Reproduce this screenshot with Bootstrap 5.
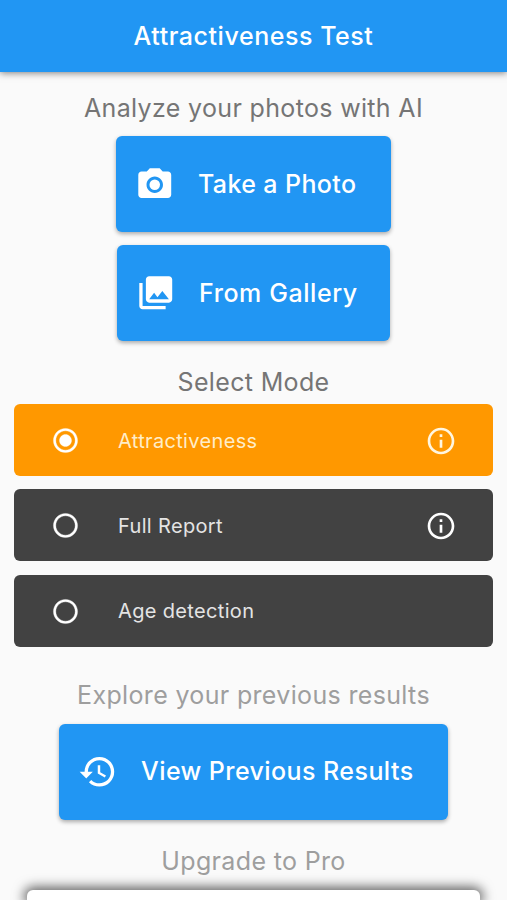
<!DOCTYPE html>
<html lang="en">
<head>
<meta charset="utf-8">
<meta name="viewport" content="width=device-width, initial-scale=1">
<title>Attractiveness Test</title>
<link href="https://cdn.jsdelivr.net/npm/bootstrap@5.3.0/dist/css/bootstrap.min.css" rel="stylesheet">
<style>
body{background:#fafafa;font-family:Inter,"Liberation Sans",sans-serif;height:900px;overflow:hidden}
.app-bar{height:72px;background:#2196f3;box-shadow:0 1px 7px rgba(0,0,0,.5);font-size:25px;font-weight:500;letter-spacing:.55px;line-height:73px}
.caption{font-size:25px;letter-spacing:.34px;line-height:32px;color:#757575;white-space:nowrap;margin-top:25px}
.caption-first{margin-top:19.5px}
.caption-results{margin-top:32px}
.caption-soft{color:#9e9e9e}
.action{height:96px;border-radius:6px;background:#2196f3;color:#fff;font-size:25px;font-weight:500;letter-spacing:.43px;padding:0 0 0 19px;gap:23.5px;box-shadow:0 2px 4px rgba(0,0,0,.32);white-space:nowrap;border:0;margin-top:12.8px}
.action:hover{background:#1e88e5;color:#fff}
.action svg{width:39.5px;height:39.5px;flex:none}
.action span{padding-top:1px}
.w-photo{width:275px;letter-spacing:.38px}
.w-gallery{width:273px;letter-spacing:.58px}
.w-history{width:389px}
.modes{gap:13.4px;padding:0 14px;margin-top:6px}
.mode{height:72px;border-radius:6px;background:#424242;color:#e4e4e4;font-size:20px;letter-spacing:.34px;padding:1px 36px 0 37px}
.mode.on{background:#ff9800;color:#ffedc8}
.mode svg{width:29px;height:29px;flex:none;fill:#fff;stroke:#fff;stroke-width:.25}
.mode .label{margin-left:38px}
.mode svg.info{width:32px;height:32px;stroke:none}
.mode.on svg.info{fill:#fff6e0}
.pro{margin:13px 27px 0;height:10px;border-radius:6px 6px 0 0;background:#fff;box-shadow:0 0 12px 3px rgba(0,0,0,.62)}
</style>
</head>
<body>
<header class="app-bar text-white text-center">Attractiveness Test</header>
<main class="d-flex flex-column align-items-center">
  <div class="caption caption-first">Analyze your photos with AI</div>
  <button class="action w-photo btn d-flex align-items-center">
    <svg viewBox="0 0 24 24" fill="currentColor"><circle cx="12" cy="12" r="3.2"/><path d="M9 2 7.17 4H4c-1.1 0-2 .9-2 2v12c0 1.1.9 2 2 2h16c1.1 0 2-.9 2-2V6c0-1.1-.9-2-2-2h-3.17L15 2H9zm3 15c-2.76 0-5-2.24-5-5s2.24-5 5-5 5 2.24 5 5-2.24 5-5 5z"/></svg>
    <span>Take a Photo</span>
  </button>
  <button class="action w-gallery btn d-flex align-items-center">
    <svg viewBox="0 0 24 24" fill="currentColor"><path d="M22 16V4c0-1.1-.9-2-2-2H8c-1.1 0-2 .9-2 2v12c0 1.1.9 2 2 2h12c1.1 0 2-.9 2-2zm-11-4 2.03 2.71L16 11l4 5H8l3-4zM2 6v14c0 1.1.9 2 2 2h14v-2H4V6H2z"/></svg>
    <span>From Gallery</span>
  </button>
  <div class="caption">Select Mode</div>
  <div class="modes d-flex flex-column w-100">
    <div class="mode on d-flex align-items-center">
      <svg viewBox="0 0 24 24"><path d="M12 7c-2.76 0-5 2.24-5 5s2.24 5 5 5 5-2.24 5-5-2.24-5-5-5zm0-5C6.48 2 2 6.48 2 12s4.48 10 10 10 10-4.48 10-10S17.52 2 12 2zm0 18c-4.42 0-8-3.58-8-8s3.58-8 8-8 8 3.58 8 8-3.58 8-8 8z"/></svg>
      <span class="label">Attractiveness</span>
      <svg class="info ms-auto" viewBox="0 0 24 24"><path d="M11 7h2v2h-2zm0 4h2v6h-2zm1-9C6.48 2 2 6.48 2 12s4.48 10 10 10 10-4.48 10-10S17.52 2 12 2zm0 18c-4.41 0-8-3.59-8-8s3.59-8 8-8 8 3.59 8 8-3.59 8-8 8z"/></svg>
    </div>
    <div class="mode d-flex align-items-center">
      <svg viewBox="0 0 24 24"><path d="M12 2C6.48 2 2 6.48 2 12s4.48 10 10 10 10-4.48 10-10S17.52 2 12 2zm0 18c-4.42 0-8-3.58-8-8s3.58-8 8-8 8 3.58 8 8-3.58 8-8 8z"/></svg>
      <span class="label">Full Report</span>
      <svg class="info ms-auto" viewBox="0 0 24 24"><path d="M11 7h2v2h-2zm0 4h2v6h-2zm1-9C6.48 2 2 6.48 2 12s4.48 10 10 10 10-4.48 10-10S17.52 2 12 2zm0 18c-4.41 0-8-3.59-8-8s3.59-8 8-8 8 3.59 8 8-3.59 8-8 8z"/></svg>
    </div>
    <div class="mode d-flex align-items-center">
      <svg viewBox="0 0 24 24"><path d="M12 2C6.48 2 2 6.48 2 12s4.48 10 10 10 10-4.48 10-10S17.52 2 12 2zm0 18c-4.42 0-8-3.58-8-8s3.58-8 8-8 8 3.58 8 8-3.58 8-8 8z"/></svg>
      <span class="label">Age detection</span>
    </div>
  </div>
  <div class="caption caption-soft caption-results">Explore your previous results</div>
  <button class="action w-history btn d-flex align-items-center">
    <svg viewBox="0 0 24 24" fill="currentColor"><path d="M13 3a9 9 0 0 0-9 9H1l3.89 3.89.07.14L9 12H6c0-3.87 3.13-7 7-7s7 3.13 7 7-3.13 7-7 7c-1.93 0-3.68-.79-4.94-2.06l-1.42 1.42A8.95 8.95 0 0 0 13 21a9 9 0 0 0 0-18zm-1 5v5l4.28 2.54.72-1.21-3.5-2.08V8H12z"/></svg>
    <span>View Previous Results</span>
  </button>
  <div class="caption caption-soft">Upgrade to Pro</div>
  <div class="pro align-self-stretch"></div>
</main>
<script src="https://cdn.jsdelivr.net/npm/bootstrap@5.3.0/dist/js/bootstrap.bundle.min.js"></script>
</body>
</html>
